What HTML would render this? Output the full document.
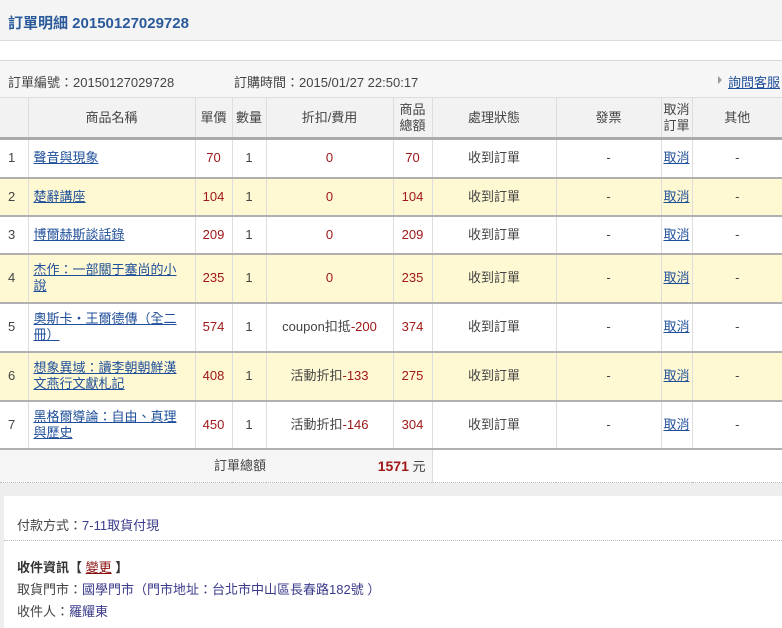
<!DOCTYPE html>
<html><head><meta charset="utf-8"><style>
*{margin:0;padding:0;box-sizing:border-box}
body{width:782px;height:628px;overflow:hidden;background:#fff;font-family:"Liberation Sans","Noto Sans CJK TC",sans-serif;font-size:13px;color:#444;position:relative}
.hd{position:absolute;left:0;top:0;width:782px;height:41px;background:#f4f4f4;border-bottom:1px solid #ddd}
.hd h1{position:absolute;left:8px;top:12px;font-size:15px;color:#2a5a9a;font-weight:bold}
.l2{position:absolute;left:0;top:60px;width:782px;height:38px;background:#f6f6f6;border-top:1px solid #d8d8d8}
.l2 span{position:absolute;top:11px;white-space:nowrap}
a{color:#1f4f9a;text-decoration:underline}
table{position:absolute;left:0;top:97px;border-collapse:collapse;width:782px;table-layout:fixed}
td,th{border-left:1px solid #ddd;text-align:center;font-weight:normal;line-height:16px;color:#444}
th{background:#f2f2f2;height:41px;border-bottom:3px solid #aaa;border-top:1px solid #ddd}
td{border-bottom:2px solid #b0b0b0}
td:first-child,th:first-child{border-left:none;text-align:left;padding-left:8px}
td.n{text-align:left;padding-left:5px}
.r{color:#a01818}
tr.y td{background:#fff9d3}
.tot td{background:#f5f5f5;border-bottom:1px dotted #bbb;height:34px}
.gap{position:absolute;left:0;top:483px;width:782px;height:145px;background:#eee}
.pn{position:absolute;left:4px;top:496px;width:778px;height:132px;background:#fff}
.pn div{position:absolute;left:13px}
.pay{color:#3a3a8a}
.tri{position:absolute;left:718px;top:15px;width:0;height:0;border-left:4px solid #999;border-top:4px solid transparent;border-bottom:4px solid transparent}
</style></head><body>
<div class="hd"><h1>訂單明細 20150127029728</h1></div>
<div class="l2"><span style="left:8px">訂單編號：20150127029728</span><span style="left:234px">訂購時間：2015/01/27 22:50:17</span><i class="tri"></i><span style="left:728px"><a>詢問客服</a></span></div>
<table>
<colgroup><col style="width:28px"><col style="width:167px"><col style="width:37px"><col style="width:34px"><col style="width:127px"><col style="width:39px"><col style="width:124px"><col style="width:105px"><col style="width:31px"><col style="width:90px"></colgroup>
<tr><th></th><th>商品名稱</th><th>單價</th><th>數量</th><th>折扣/費用</th><th>商品<br>總額</th><th>處理狀態</th><th>發票</th><th>取消<br>訂單</th><th>其他</th></tr>
<tr style="height:39px"><td>1</td><td class="n"><a>聲音與現象</a></td><td class="r">70</td><td>1</td><td class="r">0</td><td class="r">70</td><td>收到訂單</td><td>-</td><td><a>取消</a></td><td>-</td></tr>
<tr class="y" style="height:38px"><td>2</td><td class="n"><a>楚辭講座</a></td><td class="r">104</td><td>1</td><td class="r">0</td><td class="r">104</td><td>收到訂單</td><td>-</td><td><a>取消</a></td><td>-</td></tr>
<tr style="height:38px"><td>3</td><td class="n"><a>博爾赫斯談話錄</a></td><td class="r">209</td><td>1</td><td class="r">0</td><td class="r">209</td><td>收到訂單</td><td>-</td><td><a>取消</a></td><td>-</td></tr>
<tr class="y" style="height:49px"><td>4</td><td class="n"><a>杰作：一部關于塞尚的小<br>說</a></td><td class="r">235</td><td>1</td><td class="r">0</td><td class="r">235</td><td>收到訂單</td><td>-</td><td><a>取消</a></td><td>-</td></tr>
<tr style="height:49px"><td>5</td><td class="n"><a>奧斯卡・王爾德傳（全二<br>冊）</a></td><td class="r">574</td><td>1</td><td>coupon扣抵<span class="r">-200</span></td><td class="r">374</td><td>收到訂單</td><td>-</td><td><a>取消</a></td><td>-</td></tr>
<tr class="y" style="height:49px"><td>6</td><td class="n"><a>想象異域：讀李朝朝鮮漢<br>文燕行文獻札記</a></td><td class="r">408</td><td>1</td><td>活動折扣<span class="r">-133</span></td><td class="r">275</td><td>收到訂單</td><td>-</td><td><a>取消</a></td><td>-</td></tr>
<tr style="height:48px"><td>7</td><td class="n"><a>黑格爾導論：自由、真理<br>與歷史</a></td><td class="r">450</td><td>1</td><td>活動折扣<span class="r">-146</span></td><td class="r">304</td><td>收到訂單</td><td>-</td><td><a>取消</a></td><td>-</td></tr>
<tr class="tot"><td colspan="6" style="position:relative;padding:0"><span style="position:absolute;left:214px;top:8px">訂單總額</span><span style="position:absolute;right:6px;top:8px;white-space:nowrap"><b class="r" style="font-size:14px">1571</b> 元</span></td><td colspan="4" style="background:#fff"></td></tr>
</table>
<div class="gap"></div>
<div class="pn">
<div style="top:19px">付款方式：<span class="pay">7-11取貨付現</span></div>
<div style="top:44px;left:0;width:778px;border-top:1px dotted #bbb"></div>
<div style="top:61px;font-weight:bold;color:#333">收件資訊【 <a style="color:#8a1010;font-weight:normal">變更</a> 】</div>
<div style="top:83px">取貨門市：<span class="pay">國學門市（門市地址：台北市中山區長春路182號 ）</span></div>
<div style="top:105px">收件人：<span class="pay">羅耀東</span></div>
</div>
</body></html>
